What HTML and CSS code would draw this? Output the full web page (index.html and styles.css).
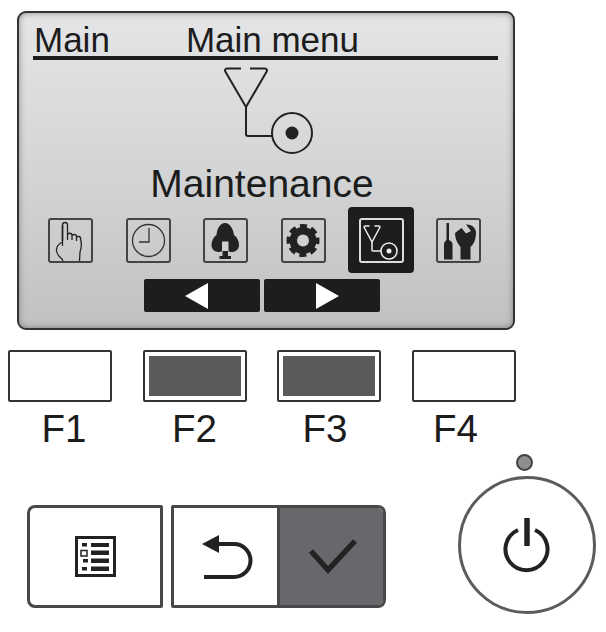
FILE: index.html
```html
<!DOCTYPE html>
<html lang="en">
<head>
    <meta charset="UTF-8">
    <title>Main menu</title>
    <link rel="stylesheet" href="styles.css">
</head>
<body>

    <div class="pantalla">
        <div class="cabecera">
            <span>Main</span>
            <span>Main menu</span>
        </div>

        <svg class="icono-grande" width="96" height="96" viewBox="0 0 96 96">
            <path d="M21 6.500H7a2 2 0 0 0-1.700 3L26 45 46.700 9.500a2 2 0 0 0-1.700-3H30" fill="none" stroke="#222" stroke-width="2"/>
            <path d="M26 45V72a2 2 0 0 0 2 2H52" fill="none" stroke="#222" stroke-width="2"/>
            <circle cx="72" cy="71" r="20" fill="none" stroke="#222" stroke-width="2"/>
            <circle cx="72" cy="71" r="6.500" fill="#222"/>
        </svg>

        <div class="titulo">Maintenance</div>

        <div class="iconos">
            <div class="icono">
                <svg width="41" height="41" viewBox="2 2 41 41">
                    <path d="M14.500 28V7a2.500 2.500 0 0 1 5 0V22M19.500 17.500a2 2 0 0 1 4.500 0V22M24 18.500a2 2 0 0 1 4.500 .5V23M28.500 20a2 2 0 0 1 4 1c1.500 5 1 9-.5 13l-.5 9M14.500 24c-4 2-6.500 5-6 9 .5 3 3 6 5.500 8l1 2" fill="none" stroke="#222" stroke-width="1.300"/>
                    <path d="M14.500 7V23" stroke="#222" stroke-width="1.600"/>
                </svg>
            </div>
            <div class="icono">
                <svg width="41" height="41" viewBox="2 2 41 41">
                    <circle cx="22.500" cy="22.500" r="16" fill="none" stroke="#333" stroke-width="1.300"/>
                    <path d="M23 10V24H13" fill="none" stroke="#333" stroke-width="1.300"/>
                </svg>
            </div>
            <div class="icono">
                <svg width="41" height="41" viewBox="2 2 41 41">
                    <path d="M22 5c5 0 8 6 9 12 3 2 5 6 5 10 0 4-3 7-7 7-1.500 0-3-.5-4-1v5h3v3H16.500v-3h3v-5c-1 .5-2.500 1-4 1-4 0-7-3-7-7 0-4 2-8 5-10C14 11 17 5 22 5z" fill="#222"/>
                    <path d="M19 23.500h6.500v9.500H19z" fill="#cfd0d1"/>
                </svg>
            </div>
            <div class="icono">
                <svg width="41" height="41" viewBox="2 2 41 41">
                    <circle cx="22" cy="22.500" r="13.500" fill="#222"/>
                    <circle cx="22" cy="22.500" r="14.500" fill="none" stroke="#222" stroke-width="4" stroke-dasharray="7 4.390" stroke-dashoffset="3.500"/>
                    <circle cx="22" cy="22.500" r="6" fill="#cfd0d1"/>
                </svg>
            </div>
            <div class="icono-activo">
                <div class="icono icono-claro">
                    <svg width="41" height="41" viewBox="2 2 41 41">
                        <path d="M10.500 8H6a1 1 0 0 0-.800 1.500L13 24 20.800 9.500a1 1 0 0 0-.800-1.500H15.500" fill="none" stroke="#eee" stroke-width="1.500"/>
                        <path d="M13 24V32a1 1 0 0 0 1 1H22" fill="none" stroke="#eee" stroke-width="1.500"/>
                        <circle cx="30" cy="33" r="8" fill="none" stroke="#eee" stroke-width="1.500"/>
                        <circle cx="30" cy="33" r="2.500" fill="#eee"/>
                    </svg>
                </div>
            </div>
            <div class="icono">
                <svg width="41" height="41" viewBox="2 2 41 41">
                    <path d="M10.500 5h2.500V22c2 1 3.500 2 3.500 4V41.500H8V26c0-2 1.500-3 2.500-4z" fill="#222"/>
                    <path d="M19 15L25.500 10 30 15.500 35 13 30 6.500C36 6 40 10 40 15 40 22 37 27 34.500 29V41.500H24.500V29C21 25 19 20 19 15z" fill="#222"/>
                </svg>
            </div>
        </div>

        <div class="flechas">
            <div class="flecha">
                <svg class="flecha-izq" width="24" height="26" viewBox="0 0 24 26"><path d="M0 13L23 0V26z" fill="#fff"/></svg>
            </div>
            <div class="flecha">
                <svg class="flecha-der" width="24" height="26" viewBox="0 0 24 26"><path d="M24 13L1 0V26z" fill="#fff"/></svg>
            </div>
        </div>
    </div>

    <div class="teclas">
        <div class="tecla"></div>
        <div class="tecla tecla-activa"><div class="relleno"></div></div>
        <div class="tecla tecla-activa"><div class="relleno"></div></div>
        <div class="tecla"></div>
    </div>
    <div class="etiquetas">
        <div>F1</div>
        <div>F2</div>
        <div>F3</div>
        <div>F4</div>
    </div>

    <div class="controles">
        <div class="botones">
            <div class="boton-menu">
                <svg width="41" height="41" viewBox="0 0 41 41">
                    <path d="M1.500 1.500H39.500V39.500H1.500z" fill="none" stroke="#222" stroke-width="3"/>
                    <path d="M16 7h18v4H16zM16 14.500h18v4.500H16zM16 22.500h18v4.500H16zM16 30.500h18v4.500H16zM7 7h5v3.500H7zM8 23h5v3.500H8zM7 31h5v3.500H7z" fill="#222"/>
                    <path d="M6 14.500h6v5.500H6z" fill="none" stroke="#222" stroke-width="1.500"/>
                </svg>
            </div>
            <div class="grupo">
                <div class="boton-volver">
                    <svg class="icono-volver" width="52" height="46" viewBox="0 0 52 46">
                        <path d="M0 10L17 1V19z" fill="#222"/>
                        <path d="M14 10H32a16 16 0 0 1 0 33H2" fill="none" stroke="#222" stroke-width="4"/>
                    </svg>
                </div>
                <div class="boton-ok">
                    <svg width="52" height="36" viewBox="0 0 52 36">
                        <path d="M5 12L22 31 49 2" fill="none" stroke="#222" stroke-width="5.500"/>
                    </svg>
                </div>
            </div>
        </div>
        <div class="encendido">
            <div class="piloto"></div>
            <div class="boton-power">
                <svg width="50" height="56" viewBox="0 0 50 56">
                    <path d="M16 13A21 21 0 1 0 33 13" fill="none" stroke="#222" stroke-width="4"/>
                    <path d="M25 1V29" stroke="#222" stroke-width="5.500"/>
                </svg>
            </div>
        </div>
    </div>

</body>
</html>
```

FILE: styles.css
```css
body {
    margin: 0;
    background-color: #fff;
    color: #1c1c1c;
    font-family: "Liberation Sans", Arial, sans-serif;
}
.pantalla {
    box-sizing: border-box;
    width: 498px;
    height: 319px;
    margin: 11px 0 0 17px;
    border: 2px solid #333;
    border-radius: 9px;
    background: linear-gradient(#e4e5e7, #d6d8da 40%, #bfc1c2);
    box-shadow: inset 0 0 6px rgba(80, 80, 80, 0.6);
}
.cabecera {
    display: flex;
    gap: 76px;
    margin: 0 15px 0 14px;
    padding: 11px 0 0 1px;
    font-size: 35px;
    line-height: 32px;
    border-bottom: 4px solid #1c1c1c;
    height: 32px;
}
.icono-grande {
    display: block;
    margin: 2px 0 0 201px;
}
.titulo {
    margin-top: 6px;
    text-align: center;
    font-size: 39px;
    line-height: 40px;
    padding-right: 8px;
}
.iconos {
    display: grid;
    grid-template-columns: repeat(6, 77.600px);
    height: 66px;
    margin: 3px 0 0 13px;
    align-items: center;
    justify-items: center;
}
.icono {
    box-sizing: border-box;
    display: flex;
    align-items: center;
    justify-content: center;
    width: 45px;
    height: 45px;
    border: 2px solid #444;
    border-radius: 3px;
}
.icono-activo {
    display: flex;
    align-items: center;
    justify-content: center;
    width: 66px;
    height: 66px;
    background-color: #1d1d1d;
    border-radius: 4px;
}
.icono-claro {
    border-color: #ddd;
}
.flechas {
    display: flex;
    gap: 4px;
    margin: 6px 0 0 125px;
}
.flecha {
    display: flex;
    align-items: center;
    justify-content: center;
    width: 116px;
    height: 33px;
    background-color: #1d1d1d;
    border-radius: 2px;
}
.flecha-izq {
    margin-right: 10px;
}
.flecha-der {
    margin-left: 9px;
}
.teclas {
    display: grid;
    grid-template-columns: repeat(4, 104px);
    column-gap: 30.500px;
    margin: 20px 0 0 8px;
}
.tecla {
    box-sizing: border-box;
    height: 52px;
    padding: 4px;
    border: 2px solid #333;
    border-radius: 2px;
}
.relleno {
    height: 100%;
    background-color: #595b5b;
}
.etiquetas {
    display: grid;
    grid-template-columns: repeat(4, 60px);
    column-gap: 70.500px;
    margin: 6px 0 0 34px;
    font-size: 38.500px;
    line-height: 42px;
    text-align: center;
}
.controles {
    display: flex;
    margin: 4px 0 0 27px;
}
.botones {
    display: flex;
    gap: 8px;
    margin-top: 51px;
}
.boton-menu {
    box-sizing: border-box;
    display: flex;
    align-items: center;
    justify-content: center;
    width: 136px;
    height: 103px;
    border: 3px solid #484848;
    border-radius: 8px 2px 2px 8px;
}
.grupo {
    display: flex;
    box-sizing: border-box;
    width: 215px;
    height: 103px;
    border: 3px solid #484848;
    border-radius: 2px 8px 8px 2px;
}
.boton-volver {
    display: flex;
    align-items: center;
    justify-content: center;
    width: 103px;
    border-right: 3px solid #484848;
}
.icono-volver {
    margin-left: 5px;
}
.boton-ok {
    display: flex;
    flex: 1;
    align-items: center;
    justify-content: center;
    background-color: #67686c;
    border-radius: 0 5px 5px 0;
}
.encendido {
    display: flex;
    flex-direction: column;
    align-items: center;
    margin-left: 72px;
}
.piloto {
    box-sizing: border-box;
    width: 17px;
    height: 17px;
    margin-right: 6px;
    border: 2px solid #444;
    border-radius: 50%;
    background-color: #8e8e8e;
}
.boton-power {
    box-sizing: border-box;
    display: flex;
    align-items: center;
    justify-content: center;
    width: 138px;
    height: 138px;
    margin-top: 5px;
    border: 3px solid #5c5c5c;
    border-radius: 50%;
}
```
